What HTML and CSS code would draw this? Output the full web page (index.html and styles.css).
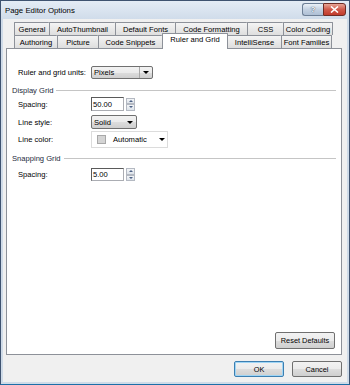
FILE: index.html
```html
<!DOCTYPE html>
<html lang="en">
<head>
    <meta charset="UTF-8">
    <title>Page Editor Options</title>
    <link rel="stylesheet" href="styles.css">
</head>
<body>

    <div class="window">
        <!-- title bar -->
        <div class="titlebar">
            <span class="title">Page Editor Options</span>
            <div class="caption-buttons">
                <div class="cap help">?</div>
                <div class="cap close">
                    <svg width="9" height="7" viewBox="0 0 9 7"><path d="M1 0.5 L8 6.5 M8 0.5 L1 6.5" stroke="#fff" stroke-width="1.6"/></svg>
                </div>
            </div>
        </div>

        <div class="client">
            <!-- tabs -->
            <div class="tabs">
                <div class="tab-row row-back">
                    <div class="tab">General</div>
                    <div class="tab">AutoThumbnail</div>
                    <div class="tab">Default Fonts</div>
                    <div class="tab">Code Formatting</div>
                    <div class="tab">CSS</div>
                    <div class="tab">Color Coding</div>
                </div>
                <div class="tab-row row-front">
                    <div class="tab">Authoring</div>
                    <div class="tab">Picture</div>
                    <div class="tab">Code Snippets</div>
                    <div class="tab active">Ruler and Grid</div>
                    <div class="tab">IntelliSense</div>
                    <div class="tab">Font Families</div>
                </div>
            </div>

            <div class="panel">
                <div class="row units-row">
                    <span class="label">Ruler and grid units:</span>
                    <div class="combo combo-pixels"><span>Pixels</span><i class="drop"></i></div>
                </div>

                <div class="group-head"><span>Display Grid</span><hr></div>
                <div class="row spacing-row">
                    <span class="label">Spacing:</span>
                    <div class="spin"><div class="num">50.00</div><div class="spin-btns"><b class="up"></b><b class="down"></b></div></div>
                </div>
                <div class="row style-row">
                    <span class="label">Line style:</span>
                    <div class="combo combo-solid"><span>Solid</span><i class="drop"></i></div>
                </div>
                <div class="row color-row">
                    <span class="label">Line color:</span>
                    <div class="color-combo"><span class="swatch"></span><span class="auto">Automatic</span><i class="arrow"></i></div>
                </div>

                <div class="group-head snap-head"><span>Snapping Grid</span><hr></div>
                <div class="row snap-row">
                    <span class="label">Spacing:</span>
                    <div class="spin"><div class="num">5.00</div><div class="spin-btns"><b class="up"></b><b class="down"></b></div></div>
                </div>

                <div class="panel-foot">
                    <button class="btn reset">Reset Defaults</button>
                </div>
            </div>

            <div class="dialog-foot">
                <button class="btn ok">OK</button>
                <button class="btn">Cancel</button>
            </div>
        </div>
    </div>

</body>
</html>
```

FILE: styles.css
```css
body { margin: 0; background: #3d5a78; font-family: "Liberation Sans", Arial, sans-serif; font-size: 7.6px; color: #000; }

.window { width: 350px; height: 385px; box-sizing: border-box; border: 1px solid #3f5370; border-bottom-color: #1c6fa8;
          background: #cfdbe8; display: flex; flex-direction: column; padding: 0 2px 2px 2px; }

/* title bar */
.titlebar { height: 18px; display: flex; align-items: center; justify-content: space-between;
            background: linear-gradient(#e4ecf5, #d0dcea); margin: 0 -2px; padding: 0 3px 0 4px; }
.title { font-size: 7.8px; color: #000; margin-top: 1px; }
.caption-buttons { display: flex; align-self: flex-start; margin-top: 2px; }
.cap { height: 13px; box-sizing: border-box; border: 1px solid #6d7f96; display: flex; align-items: center; justify-content: center;
       font-size: 8px; font-weight: bold; color: #fff; }
.help { width: 21px; border-radius: 3px 0 0 3px; background: linear-gradient(#eaf0f7, #c3d1e2 50%, #aebfd4); color: #fff;
        text-shadow: 0 0 1px #44576e, 0 0 1px #44576e; border-right: none; }
.close { width: 23px; border-radius: 0 3px 3px 0; background: linear-gradient(#e8a596, #d0594a 50%, #c13b2c); border-color: #6e2c25; }

.client { flex: 1; background: #f0f0f0; display: flex; flex-direction: column; padding: 3px 4px 4px 3px; }

/* tabs */
.tabs { margin-left: 8px; width: 319px; }
.tab-row { display: flex; height: 13px; }
.tab { box-sizing: border-box; height: 13px; border: 1px solid #8d9199; border-bottom: none; border-right: none;
       background: linear-gradient(#f4f4f4, #dedede); display: flex; align-items: center; justify-content: center;
       white-space: nowrap; border-radius: 1px 1px 0 0; }
.tab:last-child { border-right: 1px solid #8d9199; }
.row-back .tab:nth-child(1) { width: 35px; }
.row-back .tab:nth-child(2) { width: 66px; }
.row-back .tab:nth-child(3) { width: 60px; }
.row-back .tab:nth-child(4) { width: 72px; }
.row-back .tab:nth-child(5) { width: 36px; }
.row-back .tab:nth-child(6) { width: 50px; }
.row-front .tab:nth-child(1) { width: 43px; }
.row-front .tab:nth-child(2) { width: 41px; }
.row-front .tab:nth-child(3) { width: 64px; }
.row-front .tab:nth-child(4) { width: 66px; }
.row-front .tab:nth-child(5) { width: 54px; }
.row-front .tab:nth-child(6) { width: 51px; }
.tab.active { background: #fff; height: 16px; margin-top: -2px; margin-bottom: -1px; align-items: flex-start; padding-top: 1px;
              border-right: 1px solid #8d9199; margin-right: -1px; position: relative; z-index: 1; }

/* panel */
.panel { margin-left: 0; width: 336px; height: 307px; box-sizing: border-box; border: 1px solid #8d9199; background: #fff;
         display: flex; flex-direction: column; padding: 0 5px 0 5px; }
.row { display: flex; align-items: center; padding-left: 6px; }
.label { width: 73px; flex: none; }
.units-row { margin-top: 17px; height: 13px; }
.spacing-row { margin-top: 2px; height: 14px; }
.style-row { margin-top: 4px; height: 14px; }
.color-row { margin-top: 2px; height: 17px; }
.snap-row { margin-top: 5px; height: 13px; }

.group-head { display: flex; align-items: center; height: 10px; margin-top: 6px; color: #1e2b3c; }
.snap-head { margin-top: 5px; }
.group-head hr { flex: 1; border: none; border-top: 1px solid #c5c5c5; margin: 0 0 0 3px; }

/* combos */
.combo { height: 13px; box-sizing: border-box; border: 1px solid #707070; border-radius: 2px; display: flex; align-items: center;
         background: linear-gradient(#f2f2f2, #ebebeb 50%, #dddddd 51%, #cfcfcf); position: relative; padding-left: 2px; }
.combo span { flex: 1; }
.combo-pixels { width: 62px; }
.combo-solid { width: 46px; height: 14px; }
.drop { width: 12px; height: 100%; border-left: 1px solid #a8a8a8; display: flex; align-items: center; justify-content: center; }
.combo-solid .drop { border-left: none; }
.drop::after, .arrow::after { content: ""; border-left: 3px solid transparent; border-right: 3px solid transparent; border-top: 3px solid #000; }

.spin { display: flex; align-items: center; }
.num { width: 33px; height: 14px; box-sizing: border-box; border: 1px solid #abadb3; border-top-color: #5a5a5a; border-left-color: #5a5a5a;
       display: flex; align-items: center; padding-left: 1px; }
.snap-row .num { height: 13px; }
.spin-btns { margin-left: 2px; width: 9px; height: 13px; display: flex; flex-direction: column; }
.spin-btns b { flex: 1; box-sizing: border-box; border: 1px solid #b4b9c2; background: linear-gradient(#f4f6f8, #dde3ea);
               display: flex; align-items: center; justify-content: center; }
.up::after { content: ""; border-left: 2px solid transparent; border-right: 2px solid transparent; border-bottom: 2px solid #4d6185; }
.down::after { content: ""; border-left: 2px solid transparent; border-right: 2px solid transparent; border-top: 2px solid #4d6185; }

.color-combo { width: 77px; height: 17px; box-sizing: border-box; border: 1px solid #dcdcdc; display: flex; align-items: center; padding-left: 5px; }
.swatch { width: 7px; height: 7px; background: #d4d4d4; border: 1px solid #a8a8a8; }
.auto { margin-left: 7px; flex: 1; }
.arrow { width: 10px; display: flex; justify-content: center; }

/* buttons */
.btn { font-family: inherit; font-size: 7.4px; height: 17px; box-sizing: border-box; border: 1px solid #707070; border-radius: 2px;
       background: linear-gradient(#f2f2f2, #ebebeb 50%, #dddddd 51%, #cfcfcf); padding: 0; color: #000; }
.panel-foot { margin-top: auto; display: flex; justify-content: flex-end; padding: 0 1px 5px 0; }
.reset { width: 60px; }
.dialog-foot { display: flex; justify-content: flex-end; gap: 8px; margin-top: 6px; padding-right: 1px; }
.dialog-foot .btn { width: 50px; height: 16px; }
.ok { border-color: #3c7fb1; box-shadow: inset 0 0 0 1px #9fd5f5; }
```
